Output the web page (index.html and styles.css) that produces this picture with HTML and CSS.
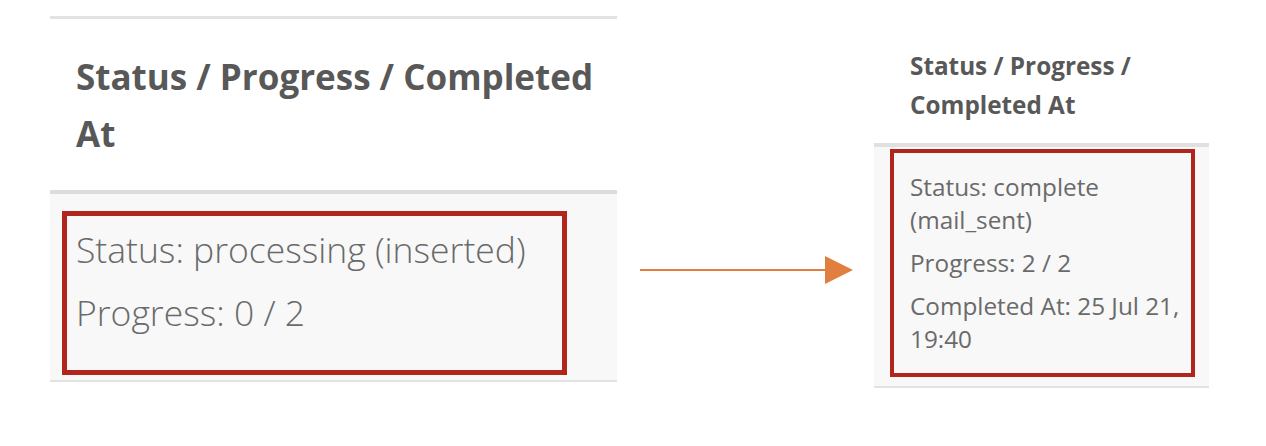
FILE: index.html
```html
<!DOCTYPE html>
<html lang="en">
<head>
<meta charset="utf-8">
<title>Status / Progress comparison</title>
<link rel="stylesheet" href="styles.css">
</head>
<body>
<main class="stage">
  <section class="panel panel-large">
    <div class="panel-head">Status / Progress / Completed At</div>
    <div class="panel-body">
      <div class="highlight">
        <p class="line">Status: processing (inserted)</p>
        <p class="line">Progress: 0 / 2</p>
      </div>
    </div>
  </section>

  <svg class="arrow" width="213" height="30" viewBox="0 0 213 30" aria-hidden="true">
    <line x1="0" y1="15" x2="188" y2="15" stroke="#e07f3f" stroke-width="2"/>
    <polygon points="185,1 213,15 185,29" fill="#e07f3f"/>
  </svg>

  <section class="panel panel-small">
    <div class="panel-head">Status / Progress / Completed At</div>
    <div class="panel-body">
      <div class="highlight">
        <p class="line">Status: complete (mail_sent)</p>
        <p class="line">Progress: 2 / 2</p>
        <p class="line">Completed At: 25 Jul 21, 19:40</p>
      </div>
    </div>
  </section>
</main>
</body>
</html>
```
FILE: styles.css
```css
html, body {
  margin: 0;
  padding: 0;
  background: #ffffff;
}

.stage {
  display: flex;
  align-items: flex-start;
  padding: 16px 0 0 50px;
  font-family: "Open Sans", Lato, "Liberation Sans", sans-serif;
}

.panel-head {
  font-weight: 700;
  color: #585858;
}

.panel-body {
  background: #f8f8f8;
}

.highlight {
  border: 5px solid #b0251c;
}

.line {
  margin: 0;
  color: #6a6a6a;
}

/* ---------- large (left) panel ---------- */
.panel-large {
  width: 567px;
  border-top: 3px solid #e3e3e3;
}

.panel-large .panel-head {
  font-size: 35px;
  line-height: 57px;
  padding: 29px 0 28px 26px;
  border-bottom: 4px solid #dcdcdc;
}

.panel-large .panel-body {
  padding: 17px 50px 5px 12px;
  border-bottom: 2px solid #e2e2e2;
}

.panel-large .highlight {
  padding: 10px 9px 34px 9px;
}

.panel-large .line {
  font-size: 35.5px;
  font-weight: 300;
  line-height: 47px;
}

.panel-large .line + .line {
  margin-top: 16px;
}

/* ---------- arrow ---------- */
.arrow {
  display: block;
  flex: none;
  margin: 239px 21px 0 23px;
}

/* ---------- small (right) panel ---------- */
.panel-small {
  width: 335px;
}

.panel-small .panel-head {
  font-size: 24.3px;
  line-height: 39px;
  padding: 30px 20px 19px 36px;
  border-bottom: 4px solid #e0e0e0;
}

.panel-small .panel-body {
  padding: 2px 14px 9px 16px;
  border-bottom: 2px solid #e2e2e2;
}

.panel-small .highlight {
  border-width: 4px;
  padding: 17px 2px 18px 16px;
}

.panel-small .line {
  font-size: 24.3px;
  font-weight: 400;
  line-height: 33px;
}

.panel-small .line + .line {
  margin-top: 10px;
}
```
